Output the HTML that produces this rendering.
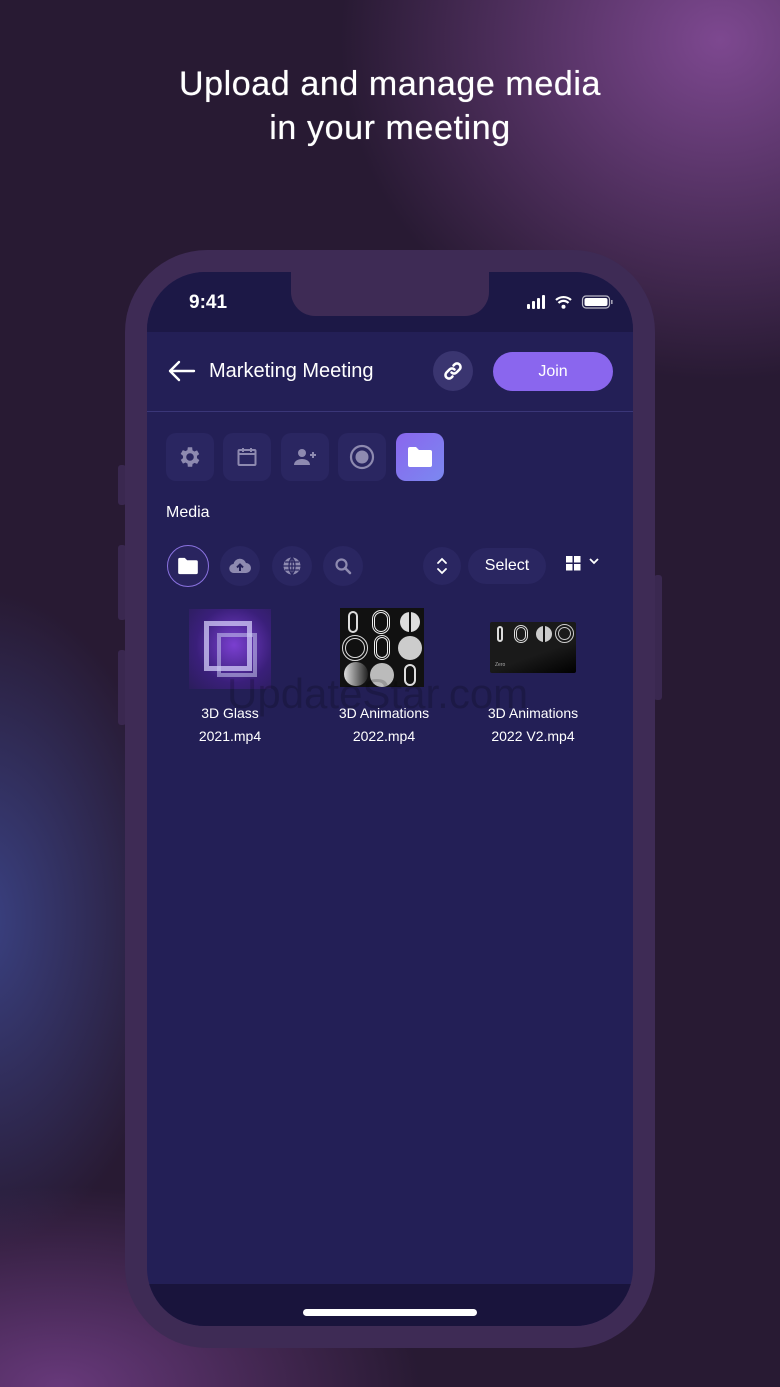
<!DOCTYPE html>
<html><head><meta charset="utf-8"><style>
*{margin:0;padding:0;box-sizing:border-box}
body{width:780px;height:1387px;overflow:hidden;position:relative;font-family:"Liberation Sans",sans-serif;
background:
radial-gradient(ellipse 380px 340px at 720px 40px,rgba(140,80,160,.85),rgba(140,80,160,0) 100%),
radial-gradient(ellipse 200px 330px at -20px 920px,rgba(60,70,140,.9),rgba(60,70,140,0) 100%),
radial-gradient(ellipse 360px 200px at 60px 1387px,rgba(110,60,130,.9),rgba(110,60,130,0) 100%),
#281a33;}
.title{position:absolute;top:62px;left:0;width:780px;text-align:center;color:#fff;font-size:34px;line-height:44px;font-weight:500;letter-spacing:.6px;text-shadow:0 0 .6px #fff}
.frame{position:absolute;left:125px;top:250px;width:530px;height:1098px;border-radius:82px;background:#3e2b55}
.btn{position:absolute;background:#3a2850;border-radius:3px}
.screen{position:absolute;left:147px;top:272px;width:486px;height:1054px;border-radius:58px;overflow:hidden;background:#231f56}
.status{position:absolute;left:0;top:0;width:486px;height:60px;background:#1c1846}
.notch{position:absolute;left:144px;top:0;width:198px;height:44px;background:#3e2b55;border-radius:0 0 24px 24px}
.bottom{position:absolute;left:0;top:1012px;width:486px;height:42px;background:#19143c}
.home{position:absolute;left:156px;top:1037px;width:174px;height:7px;border-radius:4px;background:#fff}
.t{position:absolute;color:#fff}
.sq{position:absolute;top:161px;width:48px;height:48px;border-radius:10px;background:#2a2661;display:flex;align-items:center;justify-content:center}
.ci{position:absolute;top:273px;width:40px;height:40px;border-radius:20px;background:#2a2661;display:flex;align-items:center;justify-content:center}
.cap{position:absolute;top:430px;width:150px;text-align:center;color:#fff;font-size:14px;line-height:23px}
</style></head><body>
<div class="title">Upload and manage media<br>in your meeting</div>
<div class="btn" style="left:118px;top:465px;width:8px;height:40px"></div>
<div class="btn" style="left:118px;top:545px;width:8px;height:75px"></div>
<div class="btn" style="left:118px;top:650px;width:8px;height:75px"></div>
<div class="btn" style="left:654px;top:575px;width:8px;height:125px"></div>
<div class="frame"></div>
<div class="screen">
 <div class="status"></div>
 <div class="notch"></div>
 <div class="t" style="left:42px;top:20px;font-size:19px;font-weight:600">9:41</div>
 <svg style="position:absolute;left:380px;top:22px" width="90" height="16" viewBox="0 0 90 16">
  <rect x="0" y="10" width="3" height="5" rx="1" fill="#fff"/><rect x="5" y="7" width="3" height="8" rx="1" fill="#fff"/><rect x="10" y="4" width="3" height="11" rx="1" fill="#fff"/><rect x="15" y="1" width="3" height="14" rx="1" fill="#fff"/>
  <path d="M29 6a11 11 0 0 1 15 0M31.5 9a7 7 0 0 1 10 0" stroke="#fff" stroke-width="2.2" fill="none"/><circle cx="36.5" cy="12.8" r="2" fill="#fff"/>
  <rect x="55.5" y="2" width="27" height="12" rx="3.5" stroke="#fff" stroke-width="1.2" fill="none" opacity=".7"/><rect x="57.5" y="4" width="23" height="8" rx="2" fill="#fff"/><rect x="84" y="6" width="1.6" height="4" fill="#fff" opacity=".6"/>
 </svg>
 <svg style="position:absolute;left:20px;top:88px" width="30" height="22" viewBox="0 0 30 22"><path d="M27 11H3M12 2L3 11l9 9" stroke="#fff" stroke-width="2.4" fill="none" stroke-linecap="round" stroke-linejoin="round"/></svg>
 <div class="t" style="left:62px;top:88px;font-size:20px">Marketing Meeting</div>
 <div style="position:absolute;left:286px;top:79px;width:40px;height:40px;border-radius:20px;background:#3a3570;display:flex;align-items:center;justify-content:center">
  <svg width="20" height="20" viewBox="0 0 20 20"><path d="M8.5 11.5a3.5 3.5 0 0 0 5 0l3-3a3.5 3.5 0 0 0-5-5l-1 1M11.5 8.5a3.5 3.5 0 0 0-5 0l-3 3a3.5 3.5 0 0 0 5 5l1-1" stroke="#fff" stroke-width="2.6" fill="none" stroke-linecap="round"/></svg></div>
 <div style="position:absolute;left:346px;top:80px;width:120px;height:39px;border-radius:20px;background:#8a66ee;color:#fff;font-size:16px;text-align:center;line-height:39px">Join</div>
 <div style="position:absolute;left:0;top:139px;width:486px;height:1px;background:#3a3678"></div>
 <div class="sq" style="left:19px"><svg width="26" height="26" viewBox="0 0 24 24"><path fill="#8e8ab0" d="M19.4 13a7.5 7.5 0 0 0 0-2l2.1-1.6-2-3.5-2.5 1a7.6 7.6 0 0 0-1.7-1L15 3h-4l-.4 2.6a7.6 7.6 0 0 0-1.7 1l-2.5-1-2 3.5L6.6 11a7.5 7.5 0 0 0 0 2l-2.1 1.6 2 3.5 2.5-1a7.6 7.6 0 0 0 1.7 1L11 21h4l.4-2.6a7.6 7.6 0 0 0 1.7-1l2.5 1 2-3.5zM13 15.5a3.5 3.5 0 1 1 0-7 3.5 3.5 0 0 1 0 7z" transform="translate(-1 0)"/></svg></div>
 <div class="sq" style="left:76px"><svg width="24" height="24" viewBox="0 0 24 24"><rect x="3.5" y="5" width="17" height="15" rx="1" stroke="#8e8ab0" stroke-width="2" fill="none"/><path d="M3.5 9h17M8 3v4M16 3v4" stroke="#8e8ab0" stroke-width="2"/></svg></div>
 <div class="sq" style="left:134px"><svg width="26" height="24" viewBox="0 0 26 24"><circle cx="10" cy="8" r="4" fill="#8e8ab0"/><path d="M2 20c0-4 4-6 8-6s8 2 8 6z" fill="#8e8ab0"/><path d="M21 7v6M18 10h6" stroke="#8e8ab0" stroke-width="2"/></svg></div>
 <div class="sq" style="left:191px"><svg width="28" height="28" viewBox="0 0 28 28"><circle cx="14" cy="14" r="11" stroke="#8e8ab0" stroke-width="2.2" fill="none"/><circle cx="14" cy="14" r="6.5" fill="#8e8ab0"/></svg></div>
 <div class="sq" style="left:249px;background:linear-gradient(135deg,#8a66ee,#7b88f0)"><svg width="26" height="22" viewBox="0 0 26 22"><path d="M1 3a2 2 0 0 1 2-2h6l3 3h11a2 2 0 0 1 2 2v13a2 2 0 0 1-2 2H3a2 2 0 0 1-2-2z" fill="#fff"/></svg></div>
 <div class="t" style="left:19px;top:232px;font-size:16px">Media</div>
 <div class="ci" style="left:20px;top:273px;width:42px;height:42px;border-radius:21px;border:1.5px solid #8a72e0;background:#29245f"><svg width="22" height="18" viewBox="0 0 26 22"><path d="M1 3a2 2 0 0 1 2-2h6l3 3h11a2 2 0 0 1 2 2v13a2 2 0 0 1-2 2H3a2 2 0 0 1-2-2z" fill="#fff"/></svg></div>
 <div class="ci" style="left:73px;top:274px"><svg width="22" height="16" viewBox="0 0 22 16"><path d="M5 15a4.5 4.5 0 0 1-.5-9A6.5 6.5 0 0 1 17 5a4.8 4.8 0 0 1 0 10z" fill="#8e8ab0"/><path d="M11 13V7M8 9.5l3-3 3 3" stroke="#231f56" stroke-width="2" fill="none"/></svg></div>
 <div class="ci" style="left:125px;top:274px"><svg width="20" height="20" viewBox="0 0 20 20"><circle cx="10" cy="10" r="8.5" fill="#8e8ab0"/><path d="M1.5 10h17M10 1.5v17M3 6h14M3 14h14M10 1.5c-4 4-4 13 0 17M10 1.5c4 4 4 13 0 17" stroke="#2a2661" stroke-width="1.3" fill="none"/></svg></div>
 <div class="ci" style="left:176px;top:274px"><svg width="18" height="18" viewBox="0 0 18 18"><circle cx="7.5" cy="7.5" r="5" stroke="#8e8ab0" stroke-width="2.2" fill="none"/><path d="M11 11l5 5" stroke="#8e8ab0" stroke-width="2.6" stroke-linecap="round"/></svg></div>
 <div class="ci" style="left:276px;top:275px;width:38px;height:38px"><svg width="14" height="20" viewBox="0 0 14 20"><path d="M3 7l4-4 4 4M3 13l4 4 4-4" stroke="#fff" stroke-width="1.8" fill="none" stroke-linecap="round"/></svg></div>
 <div style="position:absolute;left:321px;top:276px;width:78px;height:36px;border-radius:18px;background:#2a2661;color:#fff;font-size:16px;text-align:center;line-height:36px">Select</div>
 <svg style="position:absolute;left:419px;top:283px" width="36" height="16" viewBox="0 0 36 16"><rect x="0" y="1" width="6.5" height="6.5" fill="#fff"/><rect x="8" y="1" width="6.5" height="6.5" fill="#fff"/><rect x="0" y="9" width="6.5" height="6.5" fill="#fff"/><rect x="8" y="9" width="6.5" height="6.5" fill="#fff"/><path d="M24 4l4 4 4-4" stroke="#fff" stroke-width="1.8" fill="none"/></svg>
 <div style="position:absolute;left:42px;top:337px;width:82px;height:80px;background:radial-gradient(circle at 55% 45%,#7a3fd0,#3a1f7a 60%,#2b1e5c);overflow:hidden">
  <div style="position:absolute;left:15px;top:12px;width:48px;height:50px;border:5px solid rgba(220,215,255,.7)"></div>
  <div style="position:absolute;left:28px;top:24px;width:40px;height:44px;border:4px solid rgba(200,200,240,.55)"></div>
 </div>
 <div style="position:absolute;left:193px;top:336px;width:84px;height:79px;background:#111;overflow:hidden">
  <div style="position:absolute;left:8px;top:3px;width:10px;height:22px;border-radius:5px;border:2px solid #ddd"></div>
  <div style="position:absolute;left:32px;top:2px;width:18px;height:24px;border-radius:9px;border:3px double #eee"></div>
  <div style="position:absolute;left:60px;top:4px;width:20px;height:20px;border-radius:10px;background:linear-gradient(90deg,#ddd 45%,#111 45% 55%,#ddd 55%)"></div>
  <div style="position:absolute;left:2px;top:27px;width:26px;height:26px;border-radius:13px;border:4px double #ddd"></div>
  <div style="position:absolute;left:34px;top:27px;width:16px;height:25px;border-radius:8px;border:3px double #eee"></div>
  <div style="position:absolute;left:58px;top:28px;width:24px;height:24px;border-radius:12px;background:#ccc"></div>
  <div style="position:absolute;left:4px;top:54px;width:24px;height:24px;border-radius:12px;background:linear-gradient(90deg,#ddd,#222)"></div>
  <div style="position:absolute;left:30px;top:55px;width:24px;height:24px;border-radius:12px;background:#bbb"></div>
  <div style="position:absolute;left:64px;top:56px;width:12px;height:22px;border-radius:6px;border:2px solid #ddd"></div>
 </div>
 <div style="position:absolute;left:343px;top:350px;width:86px;height:51px;background:linear-gradient(160deg,#1a1a1a 60%,#000);border-radius:2px;overflow:hidden">
  <div style="position:absolute;left:7px;top:4px;width:6px;height:16px;border-radius:3px;border:2px solid #ddd"></div>
  <div style="position:absolute;left:24px;top:3px;width:14px;height:18px;border-radius:7px;border:3px double #ddd"></div>
  <div style="position:absolute;left:46px;top:4px;width:16px;height:16px;border-radius:8px;background:linear-gradient(90deg,#ccc 45%,#111 45% 55%,#ccc 55%)"></div>
  <div style="position:absolute;left:65px;top:2px;width:19px;height:19px;border-radius:10px;border:4px double #ccc"></div>
  <div style="position:absolute;left:5px;top:40px;color:#aaa;font-size:5px">Zero</div>
 </div>
 <div class="cap" style="left:8px">3D Glass<br>2021.mp4</div>
 <div class="cap" style="left:162px">3D Animations<br>2022.mp4</div>
 <div class="cap" style="left:311px">3D Animations<br>2022 V2.mp4</div>
 <div style="position:absolute;left:80px;top:398px;color:rgba(0,0,0,.18);font-size:42px;white-space:nowrap">UpdateStar.com</div>
 <div class="bottom"></div>
 <div class="home"></div>
</div>
</body></html>
